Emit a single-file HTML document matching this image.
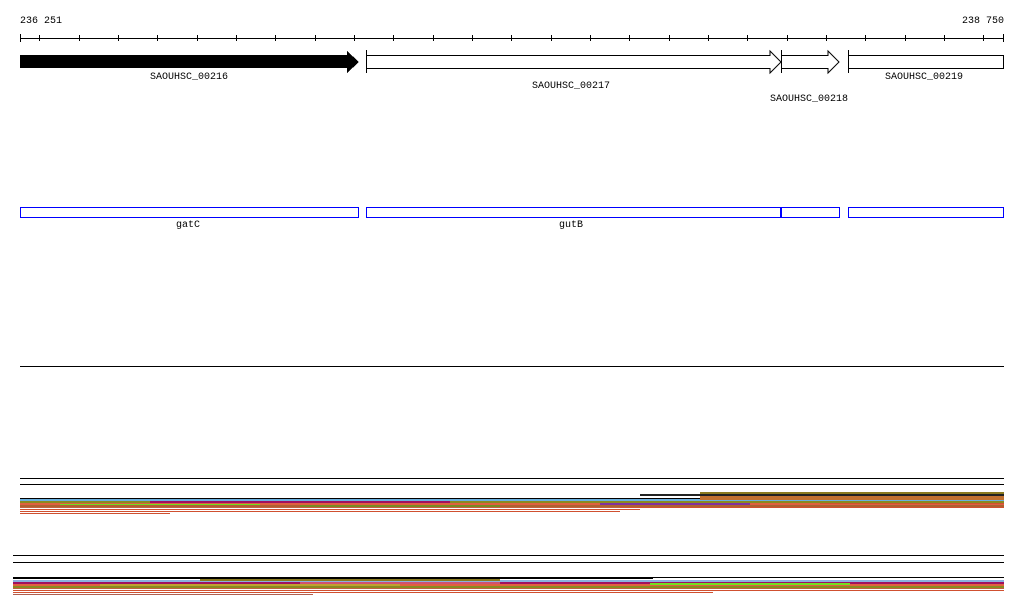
<!DOCTYPE html>
<html><head><style>
html,body{margin:0;padding:0;background:#fff;width:1024px;height:611px;overflow:hidden}
svg text{font-family:"Liberation Mono","DejaVu Sans Mono",monospace;font-size:10px;fill:#000}
</style></head><body>
<svg width="1024" height="611" viewBox="0 0 1024 611" xmlns="http://www.w3.org/2000/svg" shape-rendering="crispEdges">
<text x="20" y="23">236 251</text>
<text x="1004" y="23" text-anchor="end">238 750</text>
<line x1="20" y1="38.5" x2="1004" y2="38.5" stroke="#000"/>
<g stroke="#000">
<line x1="20.5" y1="34" x2="20.5" y2="42"/><line x1="1003.5" y1="34" x2="1003.5" y2="42"/>
<line x1="39.5" y1="35" x2="39.5" y2="41"/><line x1="79.5" y1="35" x2="79.5" y2="41"/><line x1="118.5" y1="35" x2="118.5" y2="41"/><line x1="157.5" y1="35" x2="157.5" y2="41"/><line x1="197.5" y1="35" x2="197.5" y2="41"/><line x1="236.5" y1="35" x2="236.5" y2="41"/><line x1="275.5" y1="35" x2="275.5" y2="41"/><line x1="315.5" y1="35" x2="315.5" y2="41"/><line x1="354.5" y1="35" x2="354.5" y2="41"/><line x1="393.5" y1="35" x2="393.5" y2="41"/><line x1="433.5" y1="35" x2="433.5" y2="41"/><line x1="472.5" y1="35" x2="472.5" y2="41"/><line x1="511.5" y1="35" x2="511.5" y2="41"/><line x1="551.5" y1="35" x2="551.5" y2="41"/><line x1="590.5" y1="35" x2="590.5" y2="41"/><line x1="629.5" y1="35" x2="629.5" y2="41"/><line x1="669.5" y1="35" x2="669.5" y2="41"/><line x1="708.5" y1="35" x2="708.5" y2="41"/><line x1="747.5" y1="35" x2="747.5" y2="41"/><line x1="787.5" y1="35" x2="787.5" y2="41"/><line x1="826.5" y1="35" x2="826.5" y2="41"/><line x1="865.5" y1="35" x2="865.5" y2="41"/><line x1="905.5" y1="35" x2="905.5" y2="41"/><line x1="944.5" y1="35" x2="944.5" y2="41"/><line x1="983.5" y1="35" x2="983.5" y2="41"/>
</g>
<polygon points="20,55 347,55 347,51 359,62 347,73 347,68 20,68" fill="#000"/>
<polygon points="366.5,55.5 770,55.5 770,51 781,62 770,73 770,68.5 366.5,68.5" fill="#fff" stroke="#000" shape-rendering="auto"/>
<line x1="366.5" y1="50" x2="366.5" y2="73" stroke="#000"/>
<polygon points="781.5,55.5 828,55.5 828,51 839,62 828,73 828,68.5 781.5,68.5" fill="#fff" stroke="#000" shape-rendering="auto"/>
<line x1="781.5" y1="50" x2="781.5" y2="73" stroke="#000"/>
<rect x="848.5" y="55.5" width="155" height="13" fill="#fff" stroke="#000"/>
<line x1="848.5" y1="50" x2="848.5" y2="73" stroke="#000"/>
<text x="189" y="79" text-anchor="middle">SAOUHSC_00216</text>
<text x="571" y="88" text-anchor="middle">SAOUHSC_00217</text>
<text x="809" y="101" text-anchor="middle">SAOUHSC_00218</text>
<text x="924" y="79" text-anchor="middle">SAOUHSC_00219</text>
<g fill="none" stroke="#00f">
<rect x="20.5" y="207.5" width="338" height="10"/>
<rect x="366.5" y="207.5" width="473" height="10"/>
<rect x="848.5" y="207.5" width="155" height="10"/>
</g>
<line x1="781" y1="207" x2="781" y2="218" stroke="#00f" stroke-width="2"/>
<text x="188" y="227" text-anchor="middle">gatC</text>
<text x="571" y="227" text-anchor="middle">gutB</text>
<line x1="20" y1="366.5" x2="1004" y2="366.5" stroke="#000"/>
<line x1="20" y1="478.5" x2="1004" y2="478.5" stroke="#000"/>
<line x1="20" y1="484.5" x2="1004" y2="484.5" stroke="#000"/>
<!-- band 1 -->
<rect x="640" y="494" width="364" height="2" fill="#222"/>
<rect x="700" y="492" width="304" height="2" fill="#8a7a20"/>
<rect x="20" y="498" width="820" height="1" fill="#000"/>
<rect x="20" y="499" width="984" height="2" fill="#6ab0e0"/>
<rect x="20" y="501" width="984" height="2" fill="#8a8a20"/>
<rect x="150" y="501" width="300" height="2" fill="#a01060"/>
<rect x="700" y="496" width="304" height="4" fill="#c07030"/>
<rect x="20" y="503" width="984" height="2" fill="#e06040"/>
<rect x="60" y="504" width="200" height="2" fill="#70e020"/>
<rect x="600" y="503" width="150" height="2" fill="#8030a0"/>
<rect x="20" y="505" width="984" height="2" fill="#b06030"/>
<rect x="300" y="505" width="200" height="2" fill="#7a8a20"/>
<rect x="20" y="507" width="984" height="1" fill="#c06040"/>
<rect x="20" y="509" width="620" height="1" fill="#d05030"/>
<rect x="620" y="507" width="384" height="1" fill="#d05030"/>
<rect x="20" y="511" width="600" height="1" fill="#d05030"/>
<rect x="20" y="513" width="150" height="1" fill="#d05030"/>
<rect x="820" y="503" width="184" height="1" fill="#d05030"/>
<!-- lines -->
<line x1="13" y1="555.5" x2="1004" y2="555.5" stroke="#000"/>
<line x1="13" y1="562.5" x2="1004" y2="562.5" stroke="#000"/>
<!-- band 2 -->
<rect x="13" y="577" width="640" height="2" fill="#000"/>
<rect x="653" y="577" width="351" height="1" fill="#000"/>
<rect x="13" y="580" width="991" height="2" fill="#8ab0e0"/>
<rect x="200" y="579" width="300" height="2" fill="#8a7a20"/>
<rect x="13" y="582" width="991" height="2" fill="#a01060"/>
<rect x="300" y="582" width="200" height="2" fill="#d05070"/>
<rect x="13" y="584" width="991" height="2" fill="#e06040"/>
<rect x="100" y="584" width="300" height="2" fill="#c0a030"/>
<rect x="650" y="583" width="200" height="2" fill="#70e020"/>
<rect x="13" y="586" width="991" height="2" fill="#8a8a20"/>
<rect x="13" y="588" width="991" height="1" fill="#c06040"/>
<rect x="13" y="590" width="991" height="1" fill="#d05030"/>
<rect x="13" y="592" width="700" height="1" fill="#d05030"/>
<rect x="13" y="594" width="300" height="1" fill="#b06050"/>
</svg>
</body></html>
